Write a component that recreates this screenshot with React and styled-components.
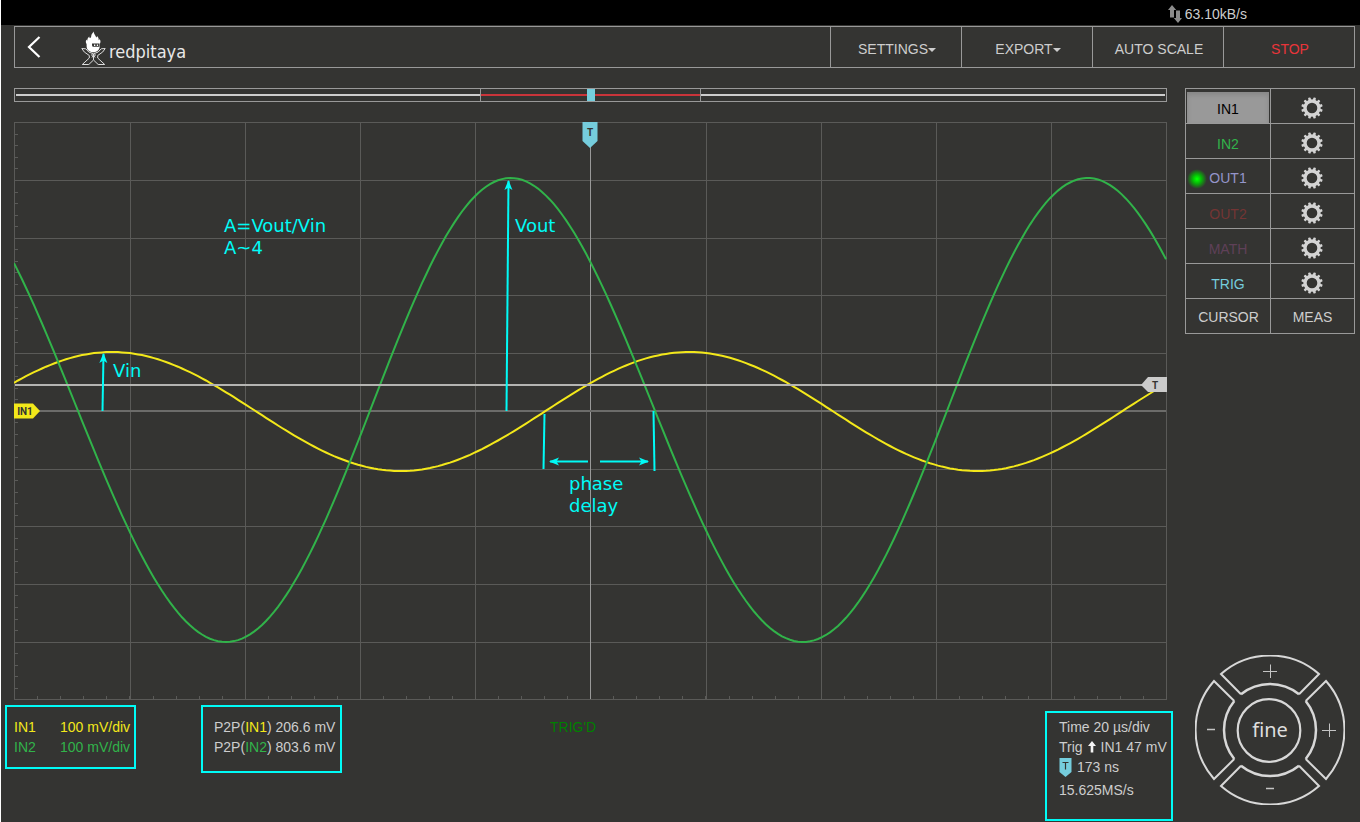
import { useState } from 'react'
import styled, { createGlobalStyle } from 'styled-components'

const GlobalStyle = createGlobalStyle`
  * {
    box-sizing: border-box;
  }

  body {
    margin: 0;
    background: #343432;
    font-family: "Liberation Sans", Arial, sans-serif;
    font-size: 14px;
    line-height: 20px;
    color: #cdcdcd;
  }

  button {
    margin: 0;
    padding: 0;
    border: none;
    background: none;
    color: inherit;
    font: inherit;
    cursor: pointer;
  }
`

const colors = {
  in1: '#f3e81a',
  in2: '#31b34a',
  out1: '#9595ca',
  out2: '#733434',
  math: '#5f4058',
  trig: '#75cddd',
  note: '#00fbf6',
}

const channels = [
  { id: 'IN1', color: colors.in1 },
  { id: 'IN2', color: colors.in2 },
  { id: 'OUT1', color: colors.out1, running: true },
  { id: 'OUT2', color: colors.out2 },
  { id: 'MATH', color: colors.math },
  { id: 'TRIG', color: colors.trig },
]

const PLOT_WIDTH = 1152
const PLOT_HEIGHT = 577
const PERIOD = 577

// Samples one channel across the plot, skew bends the phase along the period
function wavePoints({ peak, center, amplitude, skew = 0 }) {
  const points = []
  for (let x = 0; x <= PLOT_WIDTH; x += 4) {
    const bend = skew * Math.cos((2 * Math.PI * (x - 286)) / PERIOD)
    const y = center - amplitude * Math.cos((2 * Math.PI * (x - peak - bend)) / PERIOD)
    points.push(`${x},${y.toFixed(1)}`)
  }
  return points.join(' ')
}

const range = (n) => Array.from({ length: n }, (_, i) => i)

// Crisp position of a grid line or tick
const snap = (value) => Math.round(value + 0.3) + 0.5

export default function App() {
  const [active, setActive] = useState('IN1')

  return (
    <Page>
      <GlobalStyle />
      <StatusBar>
        <TransferIcon />
        63.10kB/s
      </StatusBar>

      <Content>
        <Header>
          <BackButton type="button" aria-label="Back">
            <svg width="14" height="24" viewBox="0 0 14 24" fill="none" stroke="#fff" strokeWidth="2.2">
              <path d="M12.500 2 2 12l10.500 10" />
            </svg>
          </BackButton>
          <Brand href="#">
            <Mascot />
            <span>redpitaya</span>
          </Brand>
          <HeaderButton type="button">SETTINGS<Caret /></HeaderButton>
          <HeaderButton type="button">EXPORT<Caret /></HeaderButton>
          <HeaderButton type="button">AUTO SCALE</HeaderButton>
          <HeaderButton type="button" $color="#e8343a">STOP</HeaderButton>
        </Header>

        <Workspace>
          <Scope>
            <BufferBar>
              <BufferLine />
              <BufferWindow>
                <BufferLine $color="#c9343a" />
                <BufferMarker />
                <BufferLine $color="#c9343a" />
              </BufferWindow>
              <BufferLine />
            </BufferBar>

            <Plot />

            <Readouts>
              <Readout>
                <ScaleRow $color={colors.in1}><span>IN1</span><span>100 mV/div</span></ScaleRow>
                <ScaleRow $color={colors.in2}><span>IN2</span><span>100 mV/div</span></ScaleRow>
              </Readout>
              <Readout $wide>
                <div>P2P(<Tint $color={colors.in1}>IN1</Tint>) 206.6 mV</div>
                <div>P2P(<Tint $color={colors.in2}>IN2</Tint>) 803.6 mV</div>
              </Readout>
              <TriggerState>TRIG'D</TriggerState>
              <TimeReadout>
                <div>Time 20 µs/div</div>
                <IconRow>Trig <RiseIcon /> IN1 47 mV</IconRow>
                <IconRow><PinIcon /> 173 ns</IconRow>
                <SampleRate>15.625MS/s</SampleRate>
              </TimeReadout>
            </Readouts>
          </Scope>

          <Side>
            <ChannelPanel>
              {channels.map(({ id, color, running }) => (
                <ChannelRow key={id}>
                  <Cell>
                    <ChannelButton
                      type="button"
                      $color={active === id ? '#000' : color}
                      $active={active === id}
                      $running={running}
                      onClick={() => setActive(id)}
                    >
                      {running && <Led />}
                      {id}
                    </ChannelButton>
                  </Cell>
                  <Cell>
                    <GearButton type="button" aria-label={`${id} settings`}>
                      <Gear />
                    </GearButton>
                  </Cell>
                </ChannelRow>
              ))}
              <ChannelRow>
                <Cell><MenuButton type="button">CURSOR</MenuButton></Cell>
                <Cell><MenuButton type="button">MEAS</MenuButton></Cell>
              </ChannelRow>
            </ChannelPanel>

            <Joystick />
          </Side>
        </Workspace>
      </Content>
    </Page>
  )
}

function TransferIcon() {
  return (
    <svg width="14" height="18" viewBox="0 0 14 18" fill="#8c8c8c">
      <path d="M4 0 8.200 5H6v7.500H2V5H0z" />
      <path d="M10 18 5.800 13H8V5.500h4V13h2z" />
    </svg>
  )
}

function Mascot() {
  return (
    <svg width="26" height="34" viewBox="0 0 26 34" fill="none" stroke="#dcdcdc" strokeWidth="1">
      <path d="M.8 17.500l4 .3 3 3.200 4.700 1.800 4.700-1.800 3-3.200 4-.3-2.500 3.500-5 3.500v2.500l7 6.500h-6.500l-4.700-4.500-4.700 4.500H1.300l7-6.500v-2.500l-5-3.500z" />
      <path d="M10 24h5M11 26.500l1.500-2.500 1.500 2.500M12.500 23v6" />
      <path
        fill="#fff"
        stroke="none"
        d="M12.500.500c-.8 1.800-2.200 2.600-2.300 4.700-.1 1-.5 1.500-1.200 2-.6-.5-.8-1-.7-1.800C6.800 6.700 6.200 8 6.400 9.600c-.6-.1-.9-.5-1-1.100-.8 1.500-.8 3.200.2 4.500v2.200c0 3.600 2.900 6 6.700 6s6.700-2.700 6.500-6.500V13c.9-1.500 1-3.500-.2-5-.1.700-.4 1.100-1 1.300.3-1.700-.2-3.100-1.600-4.300 0 .8-.2 1.300-.8 1.600-.5-2.100-2.300-3.600-2.700-6.100z"
      />
      <path fill="#343432" stroke="none" d="M11 12.500h7.500v3.200h-6.500c-1 0-1-1.500-1-3.200z" />
      <path stroke="#fff" strokeWidth="1.5" d="M13 14.200h1.300M15.800 14.200h1.300" />
    </svg>
  )
}

function Gear() {
  return (
    <svg width="22" height="22" viewBox="-11 -11 22 22">
      <circle r="7" fill="none" stroke="#d3d3d3" strokeWidth="3.4" />
      {range(12).map((i) => (
        <rect key={i} x="-1.3" y="-10.7" width="2.6" height="3.5" rx="0.7" fill="#d3d3d3" transform={`rotate(${i * 30 + 15})`} />
      ))}
    </svg>
  )
}

function RiseIcon() {
  return (
    <svg width="8" height="12" viewBox="0 0 8 12" fill="#f4f4f4">
      <path d="M4 0l4 5H5.300v6.500H2.700V5H0z" />
    </svg>
  )
}

function PinIcon() {
  return (
    <svg width="13" height="19" viewBox="0 0 13 19">
      <path fill={colors.trig} d="M0.500 0h12v14l-6 5-6-5z" />
      <path fill="none" stroke="#343432" strokeWidth="1.2" d="M3.500 4.500h6M6.500 4.500v7" />
    </svg>
  )
}

function Arrow({ x1, y1, x2, y2 }) {
  return <line x1={x1} y1={y1} x2={x2} y2={y2} markerEnd="url(#arrowhead)" />
}

function Plot() {
  return (
    <PlotSvg viewBox="0 0 1153 578" role="img" aria-label="Oscilloscope traces">
      <defs>
        <marker id="arrowhead" markerUnits="userSpaceOnUse" markerWidth="12" markerHeight="10" refX="9" refY="5" orient="auto">
          <path d="M0 1l10 4-10 4 2.500-4z" fill={colors.note} stroke="none" />
        </marker>
      </defs>

      <g stroke="#5a5a58" shapeRendering="crispEdges">
        {range(11).map((i) => (
          <line key={`v${i}`} x1={snap(i * 115.2)} x2={snap(i * 115.2)} y1="0" y2="578" />
        ))}
        {range(11).map((i) => (
          <line key={`h${i}`} x1="0" x2="1153" y1={snap(i * 57.7)} y2={snap(i * 57.7)} />
        ))}
        {range(50).map((i) => (
          <line key={`l${i}`} x1="0" x2="4" y1={snap(i * 11.54)} y2={snap(i * 11.54)} />
        ))}
        {range(50).map((i) => (
          <line key={`b${i}`} x1={snap(i * 23.04)} x2={snap(i * 23.04)} y1="574" y2="578" />
        ))}
      </g>

      <line x1="576.5" x2="576.5" y1="24" y2={PLOT_HEIGHT} stroke="#999" />
      <line x1="1" x2={PLOT_WIDTH} y1="289" y2="289" stroke="#6c6c6a" strokeWidth="2" />

      <g fill="none" strokeWidth="2">
        <polyline stroke={colors.in1} points={wavePoints({ peak: 98, center: 289.5, amplitude: 59.5 })} />
        <polyline stroke={colors.in2} points={wavePoints({ peak: 498.5, center: 288, amplitude: 232, skew: 2.8 })} />
      </g>
      <line x1="1" x2={PLOT_WIDTH} y1="263" y2="263" stroke="#b4b4b2" strokeWidth="2" />

      <path d="M568.500 0h15v19l-7.500 7-7.500-7z" fill={colors.trig} />
      <path d="M1127 263l7-8h19v15h-19z" fill="#cbcbcb" />
      <path d="M0 281.500h19l7 7.500-7 7.500H0z" fill={colors.in1} />
      <TagText x="576" y="14">T</TagText>
      <TagText x="1141" y="267">T</TagText>
      <TagText x="11" y="293">IN1</TagText>

      <g stroke={colors.note} strokeWidth="2">
        <Arrow x1="88.5" y1="289" x2="89.5" y2="232" />
        <Arrow x1="492.5" y1="289" x2="494.5" y2="59" />
        <Arrow x1="574" y1="339.5" x2="536" y2="339.5" />
        <Arrow x1="586" y1="339.5" x2="634" y2="339.5" />
        <line x1="530.5" y1="292" x2="529.5" y2="347" />
        <line x1="639.5" y1="289" x2="640.5" y2="349" />
      </g>
      <NoteText x="210" y="110">A=Vout/Vin</NoteText>
      <NoteText x="210" y="132">A~4</NoteText>
      <NoteText x="501" y="110">Vout</NoteText>
      <NoteText x="99" y="255">Vin</NoteText>
      <NoteText x="555" y="368">phase</NoteText>
      <NoteText x="555" y="390">delay</NoteText>
    </PlotSvg>
  )
}

function Joystick() {
  return (
    <Dial>
      <DialArt viewBox="-75 -75 150 150" fill="none" stroke="#d8d8d8">
        {range(4).map((i) => (
          <g key={i} transform={`rotate(${i * 90})`}>
            <path strokeWidth="2" d="M-29-35.700-49-56A74.300 74.300 0 0 1 49-56L29-35.700" />
            <path strokeWidth="2.5" d="M-29-35.700A46 46 0 0 1 29-35.700" />
          </g>
        ))}
        <circle cx="-1" cy="0.5" r="31.3" strokeWidth="2.2" />
      </DialArt>
      <DialButton type="button" aria-label="Vertical scale up" $area="up"><Sign plus /></DialButton>
      <DialButton type="button" aria-label="Time scale down" $area="left"><Sign /></DialButton>
      <FineButton type="button" $area="mid">fine</FineButton>
      <DialButton type="button" aria-label="Time scale up" $area="right"><Sign plus /></DialButton>
      <DialButton type="button" aria-label="Vertical scale down" $area="down"><Sign /></DialButton>
    </Dial>
  )
}

function Sign({ plus }) {
  return (
    <svg width="14" height="14" viewBox="0 0 14 14" stroke="#c4c4c4">
      {plus ? <path d="M0 7.500h14M7.500 0.500v14" /> : <path d="M3 6.500h8" strokeWidth="1.5" />}
    </svg>
  )
}

const Page = styled.div`
  display: flex;
  flex-direction: column;
  min-height: 100vh;
  border-left: 1px solid #fff;
`

const StatusBar = styled.div`
  display: flex;
  align-items: center;
  justify-content: flex-end;
  gap: 3px;
  height: 25px;
  padding: 2px 113px 0 0;
  background: #000;
`

const Content = styled.div`
  flex: 1;
  display: flex;
  flex-direction: column;
  padding: 1px 5px 0 13px;
`

const Header = styled.header`
  display: flex;
  height: 42px;
  border: 1px solid #999;
`

const BackButton = styled.button`
  display: flex;
  align-items: center;
  padding: 0 12px;
`

const Brand = styled.a`
  display: flex;
  align-items: center;
  gap: 2px;
  margin: 2px auto 0 28px;
  color: #e8e8e8;
  text-decoration: none;
  font-family: "DejaVu Sans Condensed", "DejaVu Sans", sans-serif;
  font-size: 18px;

  span {
    padding-top: 8px;
  }
`

const HeaderButton = styled.button`
  display: flex;
  align-items: center;
  justify-content: center;
  width: 131px;
  padding: 4px 0 0 2px;
  border-left: 1px solid #999;
  color: ${({ $color }) => $color || '#cdcdcd'};
`

const Caret = styled.span`
  border: 4px solid transparent;
  border-top-color: #cdcdcd;
  border-bottom: 0;
  margin-top: 2px;
`

const Workspace = styled.main`
  flex: 1;
  display: grid;
  grid-template-columns: minmax(0, 1fr) 170px;
  gap: 18px;
  padding-top: 20px;
`

const Scope = styled.section`
  display: flex;
  flex-direction: column;
`

const BufferBar = styled.div`
  display: flex;
  align-items: center;
  height: 14px;
  margin-bottom: 20px;
  padding: 0 1px;
  border: 1px solid #999;
`

const BufferLine = styled.div`
  flex: 1;
  height: 2px;
  background: ${({ $color }) => $color || '#cdcdcd'};
`

const BufferWindow = styled.div`
  display: flex;
  align-items: center;
  align-self: stretch;
  width: 221px;
  border: 1px solid #999;
  border-width: 0 1px;
`

const BufferMarker = styled.div`
  align-self: stretch;
  width: 8px;
  background: ${colors.trig};
`

const PlotSvg = styled.svg`
  display: block;
  width: 100%;
`

const TagText = styled.text`
  fill: #343432;
  font-family: Roboto, sans-serif;
  font-size: 10px;
  font-weight: 700;
  text-anchor: middle;
`

const NoteText = styled.text`
  fill: ${colors.note};
  font-family: "DejaVu Sans", sans-serif;
  font-size: 18px;
`

const Readouts = styled.div`
  display: grid;
  grid-template-columns: 196fr 349fr 495fr 128px;
  align-items: start;
  justify-items: start;
  margin: 5px -6px 0 -9px;
`

const Readout = styled.div`
  padding: ${({ $wide }) => ($wide ? '10px 5px 14px 11px' : '10px 4px 10px 7px')};
  border: 2px solid ${colors.note};
  white-space: nowrap;
`

const ScaleRow = styled.div`
  display: grid;
  grid-template-columns: 46px auto;
  color: ${({ $color }) => $color};
`

const Tint = styled.span`
  color: ${({ $color }) => $color};
`

const TriggerState = styled.div`
  padding-top: 12px;
  color: #008000;
`

const TimeReadout = styled(Readout)`
  justify-self: stretch;
  margin-top: 6px;
  padding: 4px 0 19px 12px;
`

const IconRow = styled.div`
  display: flex;
  align-items: center;
  gap: 5px;
`

const SampleRate = styled.div`
  padding-top: 3px;
`

const Side = styled.aside`
  display: flex;
  flex-direction: column;
  align-items: center;
  justify-content: space-between;
  padding-bottom: 17px;
`

const ChannelPanel = styled.div`
  width: 100%;
  border: 1px solid #999;
  border-bottom: 0;
`

const ChannelRow = styled.div`
  display: grid;
  grid-template-columns: 85px 1fr;
  height: 35px;
  border-bottom: 1px solid #999;
`

const Cell = styled.div`
  display: flex;

  & + & {
    margin-left: -1px;
    border-left: 1px solid #999;
  }
`

const ChannelButton = styled.button`
  position: relative;
  flex: 1;
  margin: 3px 2px 0 1px;
  padding-top: ${({ $running }) => ($running ? 0 : '3px')};
  color: ${({ $color }) => $color};
  background: ${({ $active }) => ($active ? '#999' : 'none')};
  box-shadow: ${({ $active }) => ($active ? 'inset 0 3px 5px rgba(0, 0, 0, 0.125)' : 'none')};
`

const Led = styled.i`
  position: absolute;
  left: 0;
  top: 8px;
  width: 20px;
  height: 20px;
  margin-top: -1px;
  border-radius: 50%;
  background: radial-gradient(circle, #0f0 5%, rgba(0, 200, 0, 0.8) 35%, rgba(0, 160, 0, 0) 70%);
`

const GearButton = styled.button`
  flex: 1;
  display: flex;
  align-items: center;
  justify-content: center;
  padding: 4px 1px 0 0;
`

const MenuButton = styled.button`
  flex: 1;
  padding-top: 2px;
`

const Dial = styled.div`
  position: relative;
  display: grid;
  grid-template: "tl up tr" 32px "left mid right" 1fr "bl down br" 32px / 32px 1fr 32px;
  width: 150px;
  height: 150px;
`

const DialArt = styled.svg`
  position: absolute;
  inset: 0;
`

const DialButton = styled.button`
  position: relative;
  grid-area: ${({ $area }) => $area};
  display: flex;
  align-items: center;
  justify-content: center;
`

const FineButton = styled(DialButton)`
  color: #dedede;
  font-family: "Noto Sans", sans-serif;
  font-size: 20px;
`
